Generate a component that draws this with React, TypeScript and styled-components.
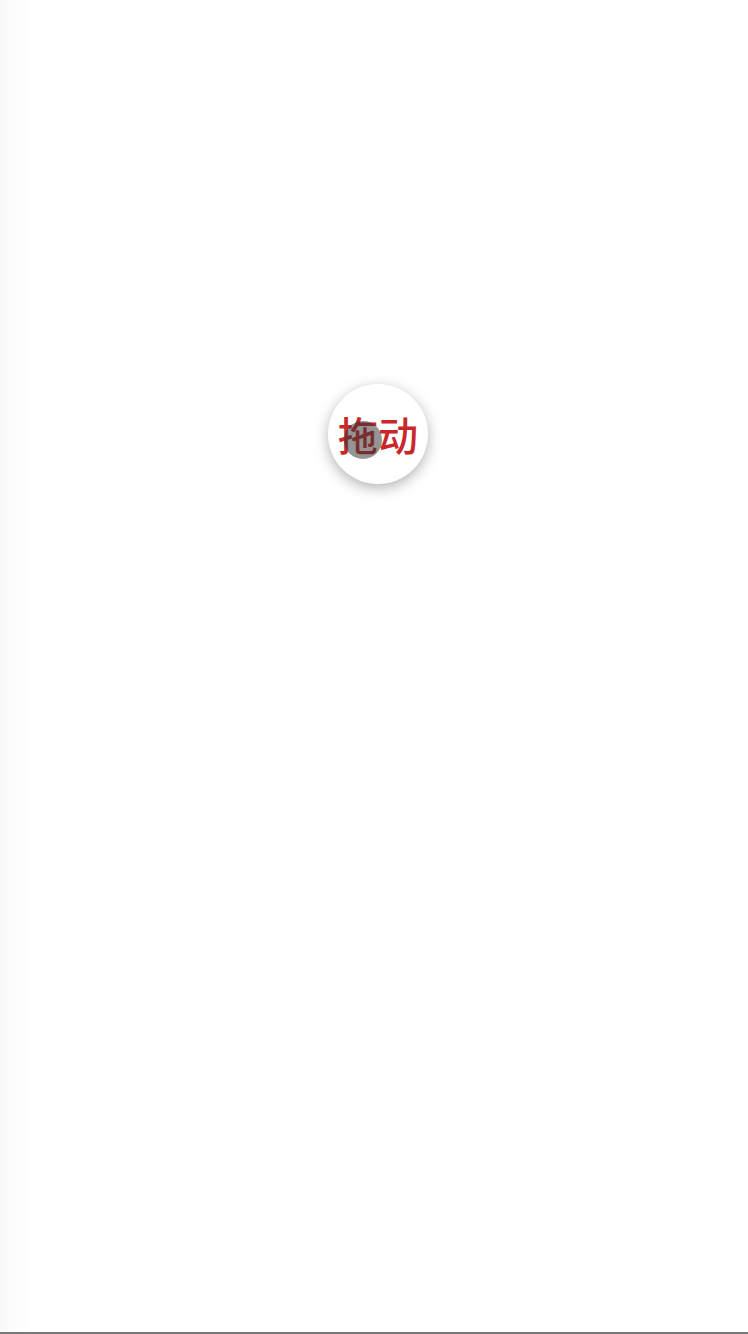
import React from "react";
import styled, { createGlobalStyle } from "styled-components";

const Global = createGlobalStyle`
  html, body { margin: 0; padding: 0; background: #ffffff; }
  body { font-family: "Noto Sans CJK SC", "Noto Sans", sans-serif; }
`;

const Stage = styled.div`
  position: relative;
  width: 748px;
  height: 1332px;
  border-bottom: 2px solid #777777;
  background: linear-gradient(to right, #f8f8f8 0px, #fafafa 8px, #fcfcfc 9px, #fdfdfd 25px, #ffffff 27px);
  overflow: hidden;
`;

const DragBall = styled.div<{ $x: number; $y: number }>`
  position: absolute;
  left: ${(p) => p.$x}px;
  top: ${(p) => p.$y}px;
  width: 100px;
  height: 100px;
  border-radius: 50%;
  background: #ffffff;
  box-shadow: 0 4px 14px rgba(0, 0, 0, 0.3);
  display: flex;
  align-items: center;
  justify-content: center;
`;

const Label = styled.span`
  font-family: "Noto Sans CJK SC", sans-serif;
  font-size: 40px;
  font-weight: 500;
  line-height: 1;
  color: #c8282a;
  letter-spacing: 0;
`;

const TouchDot = styled.div`
  position: absolute;
  left: 16px;
  top: 37px;
  width: 38px;
  height: 38px;
  border-radius: 50%;
  background: rgba(50, 50, 50, 0.52);
  filter: blur(0.6px);
`;

export default function App() {
  return (
    <>
      <Global />
      <Stage>
        <DragBall $x={328} $y={384}>
          <Label>拖动</Label>
          <TouchDot />
        </DragBall>
      </Stage>
    </>
  );
}
